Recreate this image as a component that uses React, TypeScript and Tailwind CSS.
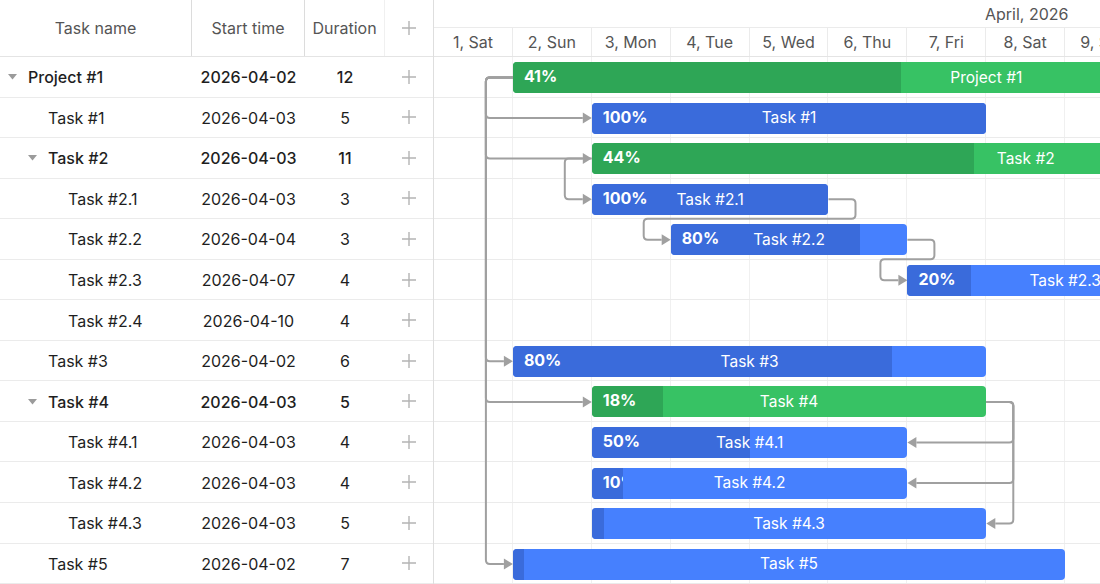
import React from 'react';

const DAY = 78.9;
const ROW = 40.55;
const BAR_H = 31;
const BAR_TOP = 5;

type Task = {
    name: string;
    start: string;
    day: number; // day of April
    duration: number;
    progress: number;
    level: number;
    parent?: boolean;
};

const tasks: Task[] = [
    { name: 'Project #1', start: '2026-04-02', day: 2, duration: 12, progress: 0.41, level: 0, parent: true },
    { name: 'Task #1', start: '2026-04-03', day: 3, duration: 5, progress: 1, level: 1 },
    { name: 'Task #2', start: '2026-04-03', day: 3, duration: 11, progress: 0.44, level: 1, parent: true },
    { name: 'Task #2.1', start: '2026-04-03', day: 3, duration: 3, progress: 1, level: 2 },
    { name: 'Task #2.2', start: '2026-04-04', day: 4, duration: 3, progress: 0.8, level: 2 },
    { name: 'Task #2.3', start: '2026-04-07', day: 7, duration: 4, progress: 0.2, level: 2 },
    { name: 'Task #2.4', start: '2026-04-10', day: 10, duration: 4, progress: 0, level: 2 },
    { name: 'Task #3', start: '2026-04-02', day: 2, duration: 6, progress: 0.8, level: 1 },
    { name: 'Task #4', start: '2026-04-03', day: 3, duration: 5, progress: 0.18, level: 1, parent: true },
    { name: 'Task #4.1', start: '2026-04-03', day: 3, duration: 4, progress: 0.5, level: 2 },
    { name: 'Task #4.2', start: '2026-04-03', day: 3, duration: 4, progress: 0.1, level: 2 },
    { name: 'Task #4.3', start: '2026-04-03', day: 3, duration: 5, progress: 0.03, level: 2 },
    { name: 'Task #5', start: '2026-04-02', day: 2, duration: 7, progress: 0.02, level: 1 },
];

const days = ['1, Sat', '2, Sun', '3, Mon', '4, Tue', '5, Wed', '6, Thu', '7, Fri', '8, Sat', '9, Sun'];

const left = (t: Task) => (t.day - 1) * DAY;
const right = (t: Task) => left(t) + t.duration * DAY;
const mid = (i: number) => i * ROW + BAR_TOP + BAR_H / 2;

// polyline with small rounded corners
function roundedPath(pts: [number, number][], r = 4) {
    let d = `M ${pts[0][0]} ${pts[0][1]}`;
    for (let i = 1; i < pts.length - 1; i++) {
        const [px, py] = pts[i - 1];
        const [cx, cy] = pts[i];
        const [nx, ny] = pts[i + 1];
        const l1 = Math.hypot(cx - px, cy - py) || 1;
        const l2 = Math.hypot(nx - cx, ny - cy) || 1;
        const r1 = Math.min(r, l1 / 2);
        const r2 = Math.min(r, l2 / 2);
        d += ` L ${cx - ((cx - px) / l1) * r1} ${cy - ((cy - py) / l1) * r1}`;
        d += ` Q ${cx} ${cy} ${cx + ((nx - cx) / l2) * r2} ${cy + ((ny - cy) / l2) * r2}`;
    }
    const last = pts[pts.length - 1];
    d += ` L ${last[0]} ${last[1]}`;
    return d;
}

type Link = { pts: [number, number][]; dir: 'right' | 'left' };

function buildLinks(): Link[] {
    const links: Link[] = [];
    const off = 27;
    const head = 9;
    // start-to-start from project
    const p = tasks[0];
    [1, 2, 7, 8, 12].forEach((i) => {
        const x = left(tasks[i]);
        links.push({
            pts: [[left(p), mid(0)], [left(p) - off, mid(0)], [left(p) - off, mid(i)], [x - head, mid(i)]],
            dir: 'right',
        });
    });
    // Task #2 -> Task #2.1
    links.push({
        pts: [[left(tasks[2]), mid(2)], [left(tasks[2]) - off, mid(2)], [left(tasks[2]) - off, mid(3)], [left(tasks[3]) - head, mid(3)]],
        dir: 'right',
    });
    // finish-to-start chains
    [[3, 4], [4, 5]].forEach(([a, b]) => {
        const xa = right(tasks[a]);
        const xb = left(tasks[b]);
        const yb = b * ROW - 0.5;
        links.push({
            pts: [[xa, mid(a)], [xa + off, mid(a)], [xa + off, yb], [xb - off, yb], [xb - off, mid(b)], [xb - head, mid(b)]],
            dir: 'right',
        });
    });
    // finish-to-finish from Task #4
    const t4 = tasks[8];
    [9, 10, 11].forEach((i) => {
        const x = right(tasks[i]);
        links.push({
            pts: [[right(t4), mid(8)], [right(t4) + off, mid(8)], [right(t4) + off, mid(i)], [x + head, mid(i)]],
            dir: 'left',
        });
    });
    return links;
}

function Plus() {
    return (
        <svg width="16" height="16" viewBox="0 0 16 16" className="text-[#b4b4b4]">
            <path d="M8 1v14M1 8h14" stroke="currentColor" strokeWidth="1.4" />
        </svg>
    );
}

function Caret() {
    return (
        <svg width="9" height="6" viewBox="0 0 9 6" className="text-[#9b9b9b]">
            <path d="M0 0h9L4.5 5.5z" fill="currentColor" />
        </svg>
    );
}

function Bar({ task, index }: { task: Task; index: number }) {
    const isProject = !!task.parent;
    const base = isProject ? 'bg-[#37c264]' : 'bg-[#4680fe]';
    const done = isProject ? 'bg-[#2ea656]' : 'bg-[#3a6bdb]';
    const width = task.duration * DAY;
    const doneWidth = width * task.progress;
    return (
        <div
            className={`absolute rounded-[4px] overflow-hidden ${base}`}
            style={{ left: left(task), top: index * ROW + BAR_TOP, width, height: BAR_H }}
        >
            <div className={`absolute left-0 top-0 bottom-0 overflow-hidden ${done}`} style={{ width: doneWidth }}>
                {doneWidth > 20 && (
                    <span className="absolute left-[11px] top-0 leading-[29px] text-[16px] font-bold text-white whitespace-nowrap">
                        {Math.round(task.progress * 100)}%
                    </span>
                )}
            </div>
            <div className="absolute inset-0 flex items-center justify-center text-[15.5px] text-white whitespace-nowrap">
                {task.name}
            </div>
        </div>
    );
}

export default function App() {
    const links = buildLinks();
    return (
        <div className="w-[1100px] h-[584px] flex bg-white overflow-hidden font-['Inter','Liberation_Sans',sans-serif] text-[16px]">
            {/* Grid */}
            <div className="w-[434px] shrink-0 border-r border-[#dedede] flex flex-col">
                <div className="h-[57px] shrink-0 grid grid-cols-[192px_113px_80px_48px] border-b border-[#e4e4e4] text-[#555]">
                    <div className="flex items-center justify-center border-r border-[#dcdcdc]">Task name</div>
                    <div className="flex items-center justify-center border-r border-[#dcdcdc]">Start time</div>
                    <div className="flex items-center justify-center border-r border-[#f0f0f0]">Duration</div>
                    <div className="flex items-center justify-center">
                        <Plus />
                    </div>
                </div>
                {tasks.map((t) => (
                    <div
                        key={t.name}
                        className={`h-[40.55px] shrink-0 grid grid-cols-[192px_113px_80px_48px] border-b border-[#ebebeb] text-[#1e1e1e] ${t.parent ? 'font-medium' : ''}`}
                    >
                        <div className="flex items-center pt-px" style={{ paddingLeft: 8 + t.level * 20 }}>
                            <div className="w-5 flex items-center">{t.parent && <Caret />}</div>
                            <span>{t.name}</span>
                        </div>
                        <div className="flex items-center justify-center pt-px">{t.start}</div>
                        <div className="flex items-center justify-center pt-px">{t.duration}</div>
                        <div className="flex items-center justify-center">
                            <Plus />
                        </div>
                    </div>
                ))}
            </div>

            {/* Timeline */}
            <div className="flex-1 flex flex-col overflow-hidden">
                <div className="h-[57px] shrink-0 flex flex-col border-b border-[#e4e4e4] text-[#555]">
                    <div className="h-[28px] flex items-center pl-[551px] border-b border-[#ebebeb] whitespace-nowrap">
                        April, 2026
                    </div>
                    <div className="flex-1 flex">
                        {days.map((d) => (
                            <div key={d} className="w-[78.9px] shrink-0 flex items-center justify-center border-r border-[#ebebeb] whitespace-nowrap">
                                {d}
                            </div>
                        ))}
                    </div>
                </div>
                <div className="relative flex-1">
                    <div className="absolute inset-0 flex">
                        {days.map((d) => (
                            <div key={d} className="w-[78.9px] shrink-0 h-full border-r border-[#f0f0f0]" />
                        ))}
                    </div>
                    <div className="absolute inset-0 flex flex-col">
                        {tasks.map((t) => (
                            <div key={t.name} className="h-[40.55px] shrink-0 border-b border-[#ebebeb]" />
                        ))}
                    </div>
                    <svg className="absolute inset-0" width="666" height="527">
                        {links.map((l, i) => {
                            const last = l.pts[l.pts.length - 1];
                            const tip = l.dir === 'right' ? last[0] + 9 : last[0] - 9;
                            const y = last[1];
                            const head = `${last[0]},${y - 5.5} ${tip},${y} ${last[0]},${y + 5.5}`;
                            return (
                                <g key={i}>
                                    <path d={roundedPath(l.pts)} fill="none" stroke="#a0a0a0" strokeWidth="2" />
                                    <polygon points={head} fill="#a0a0a0" />
                                </g>
                            );
                        })}
                    </svg>
                    {tasks.map((t, i) => (
                        <Bar key={t.name} task={t} index={i} />
                    ))}
                </div>
            </div>
        </div>
    );
}
